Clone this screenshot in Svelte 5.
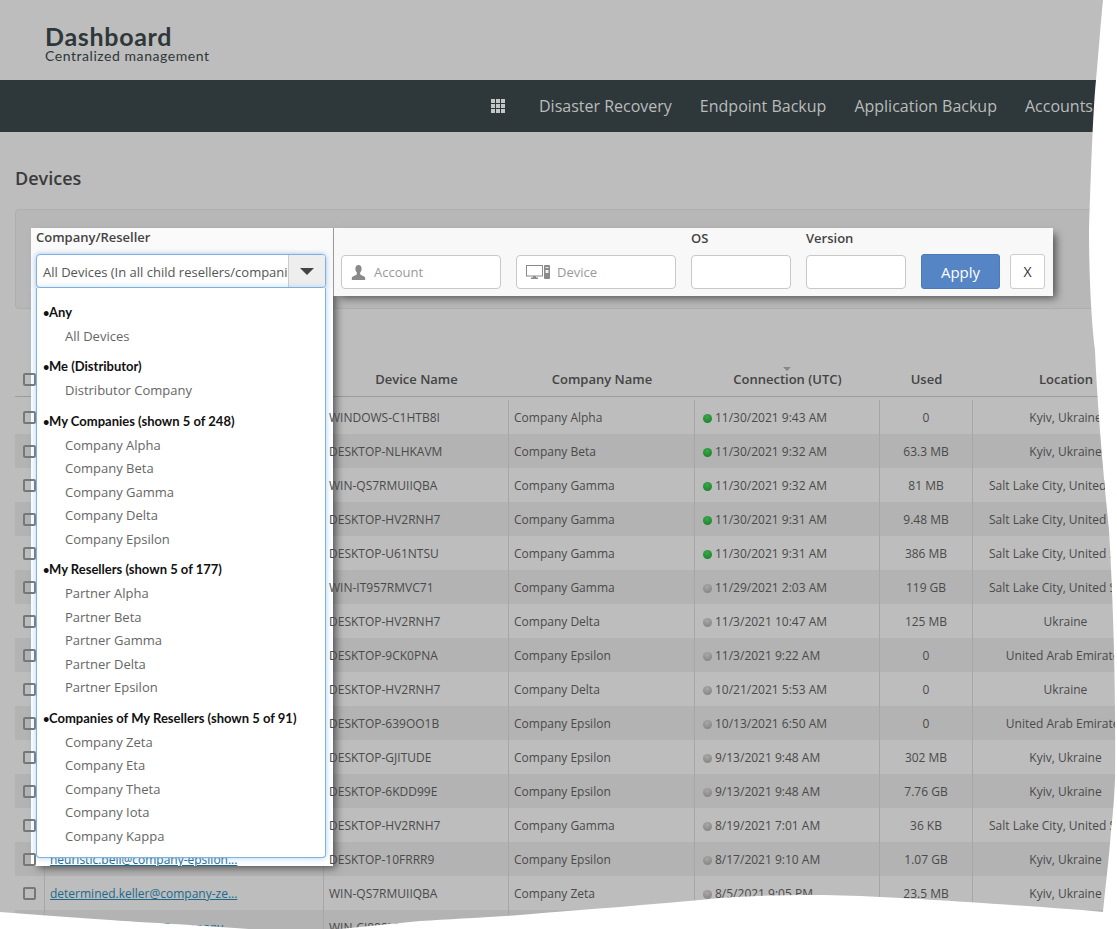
<script>
  const navItems = ['Disaster Recovery', 'Endpoint Backup', 'Application Backup', 'Accounts'];

  const groups = [
    { title: 'Any', items: ['All Devices'] },
    { title: 'Me (Distributor)', items: ['Distributor Company'] },
    { title: 'My Companies (shown 5 of 248)', items: ['Company Alpha', 'Company Beta', 'Company Gamma', 'Company Delta', 'Company Epsilon'] },
    { title: 'My Resellers (shown 5 of 177)', items: ['Partner Alpha', 'Partner Beta', 'Partner Gamma', 'Partner Delta', 'Partner Epsilon'] },
    { title: 'Companies of My Resellers (shown 5 of 91)', items: ['Company Zeta', 'Company Eta', 'Company Theta', 'Company Iota', 'Company Kappa'] }
  ];

  const salt = 'Salt Lake City, United States';
  const kyiv = 'Kyiv, Ukraine';
  const uae = 'United Arab Emirates';

  const rows = [
    { device: 'WINDOWS-C1HTB8I', company: 'Company Alpha', online: true, date: '11/30/2021 9:43 AM', used: '0', location: kyiv },
    { device: 'DESKTOP-NLHKAVM', company: 'Company Beta', online: true, date: '11/30/2021 9:32 AM', used: '63.3 MB', location: kyiv },
    { device: 'WIN-QS7RMUIIQBA', company: 'Company Gamma', online: true, date: '11/30/2021 9:32 AM', used: '81 MB', location: salt },
    { device: 'DESKTOP-HV2RNH7', company: 'Company Gamma', online: true, date: '11/30/2021 9:31 AM', used: '9.48 MB', location: salt },
    { device: 'DESKTOP-U61NTSU', company: 'Company Gamma', online: true, date: '11/30/2021 9:31 AM', used: '386 MB', location: salt },
    { device: 'WIN-IT957RMVC71', company: 'Company Gamma', date: '11/29/2021 2:03 AM', used: '119 GB', location: salt },
    { device: 'DESKTOP-HV2RNH7', company: 'Company Delta', date: '11/3/2021 10:47 AM', used: '125 MB', location: 'Ukraine' },
    { device: 'DESKTOP-9CK0PNA', company: 'Company Epsilon', date: '11/3/2021 9:22 AM', used: '0', location: uae },
    { device: 'DESKTOP-HV2RNH7', company: 'Company Delta', date: '10/21/2021 5:53 AM', used: '0', location: 'Ukraine' },
    { device: 'DESKTOP-639OO1B', company: 'Company Epsilon', date: '10/13/2021 6:50 AM', used: '0', location: uae },
    { device: 'DESKTOP-GJITUDE', company: 'Company Epsilon', date: '9/13/2021 9:48 AM', used: '302 MB', location: kyiv },
    { device: 'DESKTOP-6KDD99E', company: 'Company Epsilon', date: '9/13/2021 9:48 AM', used: '7.76 GB', location: kyiv },
    { device: 'DESKTOP-HV2RNH7', company: 'Company Gamma', date: '8/19/2021 7:01 AM', used: '36 KB', location: salt },
    { account: 'heuristic.bell@company-epsilon...', device: 'DESKTOP-10FRRR9', company: 'Company Epsilon', date: '8/17/2021 9:10 AM', used: '1.07 GB', location: kyiv },
    { account: 'determined.keller@company-ze...', device: 'WIN-QS7RMUIIQBA', company: 'Company Zeta', date: '8/5/2021 9:05 PM', used: '23.5 MB', location: kyiv },
    { account: 'competent.jennings@company...', device: 'WIN-CI88SLF55', company: '', date: '', used: '', location: '' }
  ];
</script>

<div class="page">
  <header class="top">
    <div class="brand">Dashboard</div>
    <div class="tagline">Centralized management</div>
  </header>

  <nav class="nav">
    <svg class="apps" width="14" height="14" viewBox="0 0 14 14" fill="#c4c7c7">
      {#each [0, 5, 10] as y}
        {#each [0, 5, 10] as x}
          <rect {x} {y} width="4" height="4" />
        {/each}
      {/each}
    </svg>
    {#each navItems as item}
      <span class="nav-item">{item}</span>
    {/each}
  </nav>

  <main class="main">
    <h1>Devices</h1>

    <section class="filters">
      <div class="company">
        <div class="company-label">Company/Reseller</div>
        <div class="select">
          <span class="select-value">All Devices (In all child resellers/companies)</span>
          <span class="select-arrow"><i></i></span>
        </div>
        <div class="dropdown">
          {#each groups as group}
            <div class="group">{group.title}</div>
            {#each group.items as item}
              <div class="option">{item}</div>
            {/each}
          {/each}
        </div>
      </div>

      <div class="bar">
        <div class="field">
          <div class="input">
            <svg width="15" height="15" viewBox="0 0 18 18" fill="#8a8a8a">
              <path d="M9 0c2.300 0 3.800 1.800 3.800 4.500 0 1.800-.7 3.400-1.800 4.500v1.800c0 .8 1 1.200 3 2 1.800.7 3 1.300 3 2.700V18H1v-2.500c0-1.400 1.200-2 3-2.700 2-.8 3-1.200 3-2V9C5.900 7.900 5.200 6.300 5.200 4.500 5.200 1.800 6.700 0 9 0z" />
            </svg>
            <span>Account</span>
          </div>
        </div>
        <div class="field">
          <div class="input device-input">
            <svg width="24" height="14" viewBox="0 0 24 14">
              <rect x=".5" y=".5" width="16" height="10.500" fill="none" stroke="#8a8a8a" />
              <path d="M7 11h3v1.500h2V14H5v-1.500h2z" fill="#8a8a8a" />
              <rect x="18" y="0" width="6" height="14" rx="1" fill="#8a8a8a" />
              <rect x="19.500" y="2" width="3" height="1" fill="#eee" />
              <rect x="19.500" y="5" width="3" height="3" fill="#eee" />
            </svg>
            <span>Device</span>
          </div>
        </div>
        <div class="field small">
          <label for="os">OS</label>
          <input id="os" />
        </div>
        <div class="field small">
          <label for="version">Version</label>
          <input id="version" />
        </div>
        <button class="apply">Apply</button>
        <button class="clear">X</button>
      </div>
    </section>

    <div class="table">
      <div class="head grid">
        <div class="check-cell"><span class="check"></span></div>
        <div></div>
        <div>Device Name</div>
        <div>Company Name</div>
        <div class="sorted">Connection (UTC)</div>
        <div>Used</div>
        <div>Location</div>
      </div>
      {#each rows as row, i}
        <div class="row grid" class:odd={i % 2 === 1}>
          <div class="check-cell"><span class="check"></span></div>
          <div class="cell account">{#if row.account}<a href="#top">{row.account}</a>{/if}</div>
          <div class="cell"><span class="device">{row.device}</span></div>
          <div class="cell">{row.company}</div>
          <div class="cell connection">
            {#if row.date}<span class="dot" class:online={row.online}></span>{row.date}{/if}
          </div>
          <div class="cell center">{row.used}</div>
          <div class="cell center location">{row.location}</div>
        </div>
      {/each}
    </div>
  </main>

  <svg class="tear" width="1117" height="929" viewBox="0 0 1117 929">
    <path
      fill="#fff"
      d="M1103 0 C1100 30 1098 60 1096 80 C1093 110 1091 170 1089 230 C1089 270 1091 320 1095 350 C1097 400 1103 470 1109 530 C1113 600 1116 680 1115 780 C1114 800 1113 815 1111 830 C1109 860 1105 890 1103 912 C1060 908 1010 905 967 902 C920 899 860 895 815 895 C780 895 750 896 720 898 C650 905 590 909 520 915 C480 918 450 919 420 921 C390 924 360 927 330 930 L260 930 C240 928 215 927 190 925 C160 923 135 922 110 920 C70 917 35 915 0 912 L0 929 L1117 929 L1117 0 Z"
    />
  </svg>
</div>

<style>
  :global(body) {
    font-family: 'Open Sans', 'Liberation Sans', sans-serif;
  }
  .page {
    position: relative;
    width: 1117px;
    height: 929px;
    overflow: hidden;
    background: #bdbdbd;
    color: #444;
    font-size: 13px;
  }
  .top {
    box-sizing: border-box;
    height: 80px;
    padding: 24px 0 0 45px;
    font-family: Lato, 'Open Sans', sans-serif;
    color: #2e3739;
  }
  .brand {
    font-size: 25px;
    font-weight: 700;
    letter-spacing: 0.7px;
    line-height: 24px;
  }
  .tagline {
    font-size: 14px;
    letter-spacing: 0.55px;
    line-height: 16px;
  }
  .nav {
    display: flex;
    align-items: center;
    height: 52px;
    padding-left: 491px;
    gap: 28px;
    background: #2e3739;
    color: #b9bcbc;
    font-size: 16px;
    white-space: nowrap;
  }
  .apps {
    flex: none;
    margin-right: 6px;
  }
  .main {
    padding-left: 15px;
  }
  h1 {
    margin: 34px 0 19px;
    font-size: 18px;
    font-weight: 600;
    line-height: 24px;
    color: #3a3a3a;
  }
  .filters {
    position: relative;
    box-sizing: border-box;
    height: 100px;
    margin-bottom: 53px;
    border: 1px solid #aeaeae;
    border-radius: 4px;
    background: #b7b7b7;
  }
  .bar {
    position: absolute;
    left: 317px;
    top: 18px;
    box-sizing: border-box;
    display: flex;
    align-items: flex-end;
    width: 720px;
    height: 68px;
    padding: 0 7px 7px 7px;
    border-left: 1px solid #9a9a9a;
    background: #f8f8f8;
    box-shadow: 5px 4px 8px -2px rgba(0, 0, 0, 0.55);
  }
  .field {
    display: flex;
    flex-direction: column;
    width: 160px;
    margin-right: 15px;
  }
  .field.small {
    width: 100px;
  }
  .field label {
    font-size: 13px;
    font-weight: 600;
    line-height: 18px;
    margin-bottom: 8px;
    color: #444;
  }
  .input,
  .field input {
    box-sizing: border-box;
    height: 34px;
    width: 100%;
    border: 1px solid #c8c8c8;
    border-radius: 4px;
    background: #fff;
  }
  .input {
    display: flex;
    align-items: center;
    gap: 8px;
    padding-left: 9px;
    color: #999;
  }
  .input svg {
    flex: none;
  }
  .device-input {
    gap: 7px;
  }
  .apply,
  .clear {
    height: 35px;
    border-radius: 3px;
    font-family: inherit;
  }
  .apply {
    width: 79px;
    margin-right: 10px;
    border: 1px solid #4a7ab8;
    background: #5585c5;
    color: #fff;
    font-size: 15px;
  }
  .clear {
    width: 35px;
    border: 1px solid #ccc;
    background: #fff;
    color: #333;
    font-size: 14px;
  }
  .company {
    position: absolute;
    left: 15px;
    top: 18px;
    box-sizing: border-box;
    width: 302px;
    height: 638px;
    padding: 0 7px 0 5px;
    background: linear-gradient(#fafafa 0, #fafafa 60px, #fff 60px);
    box-shadow: 5px 4px 8px -2px rgba(0, 0, 0, 0.55);
  }
  .company-label {
    height: 26px;
    font-size: 13px;
    font-weight: 600;
    line-height: 18px;
    color: #444;
  }
  .select {
    position: relative;
    z-index: 2;
    box-sizing: border-box;
    display: flex;
    height: 34px;
    border: 1px solid #7fb2e0;
    border-radius: 4px;
    background: #fff;
    box-shadow: 0 0 5px rgba(110, 170, 230, 0.7);
    overflow: hidden;
  }
  .select-value {
    flex: 1;
    min-width: 0;
    padding-left: 6px;
    font-size: 13px;
    line-height: 34px;
    color: #555;
    white-space: nowrap;
    overflow: hidden;
  }
  .select-arrow {
    flex: none;
    display: flex;
    align-items: center;
    justify-content: center;
    width: 36px;
    border-left: 1px solid #ccc;
    background: #eee;
  }
  .select-arrow i {
    border: 7px solid transparent;
    border-top: 7px solid #444;
    border-bottom: 0;
    width: 0;
    height: 0;
  }
  .dropdown {
    position: relative;
    z-index: 2;
    box-sizing: border-box;
    height: 570px;
    padding-top: 11.5px;
    border: 1px solid #7fb2e0;
    border-top: 0;
    border-radius: 0 0 4px 4px;
    background: #fff;
    box-shadow: 0 0 6px rgba(110, 170, 230, 0.55);
  }
  .group {
    height: 25px;
    margin-top: 6px;
    padding-left: 6px;
    font-family: Lato, 'Open Sans', sans-serif;
    font-size: 13px;
    font-weight: 700;
    line-height: 25px;
    color: #111;
    white-space: nowrap;
  }
  .group:first-child {
    margin-top: 0;
  }
  .group::before {
    content: '\2022';
    display: inline-block;
    width: 6px;
    font-size: 11px;
  }
  .option {
    height: 23.5px;
    padding-left: 28px;
    font-size: 13px;
    line-height: 23.5px;
    color: #666;
  }
  .grid {
    display: grid;
    grid-template-columns: 29px 279px 185px 186px 185px 93px 186px;
    width: 1143px;
  }
  .head {
    box-sizing: border-box;
    height: 35px;
    margin-bottom: 3px;
    border-bottom: 1px solid #9c9c9c;
    font-weight: 600;
    text-align: center;
    line-height: 35px;
    color: #444;
  }
  .head > div {
    padding-left: 2px;
  }
  .sorted {
    position: relative;
  }
  .sorted::before {
    content: '';
    position: absolute;
    left: 89px;
    top: 5px;
    border: 4px solid transparent;
    border-top: 4px solid #888;
    border-bottom: 0;
  }
  .row {
    height: 34px;
    font-size: 12px;
  }
  .row.odd {
    background: #b3b3b3;
  }
  .cell {
    height: 34px;
    padding-left: 5px;
    border-left: 1px solid #a6a6a6;
    line-height: 36px;
    white-space: nowrap;
    overflow: hidden;
    color: #4a4a4a;
  }
  .center {
    padding: 0;
    text-align: center;
  }
  .location {
    box-sizing: border-box;
    padding: 0 16px;
    overflow: visible;
  }
  .account {
    padding-left: 5px;
    overflow: visible;
  }
  .account a {
    position: relative;
    z-index: 1;
    color: #1c6a8c;
  }
  .device {
    position: relative;
    z-index: 1;
  }
  .check-cell {
    position: relative;
    z-index: 1;
    display: flex;
    align-items: center;
    padding-left: 8px !important;
  }
  .check {
    box-sizing: border-box;
    width: 13px;
    height: 13px;
    border: 2px solid #777;
    border-radius: 2px;
  }
  .connection {
    padding-left: 8px;
  }
  .dot {
    display: inline-block;
    width: 9px;
    height: 9px;
    margin-right: 3px;
    border-radius: 50%;
    background: radial-gradient(circle at 45% 30%, #a8a8a8, #7c7c7c);
    vertical-align: -1px;
  }
  .dot.online {
    background: radial-gradient(circle at 45% 30%, #3aa84a, #177a25);
  }
  .tear {
    position: absolute;
    left: 0;
    top: 0;
    z-index: 5;
    pointer-events: none;
  }
</style>
